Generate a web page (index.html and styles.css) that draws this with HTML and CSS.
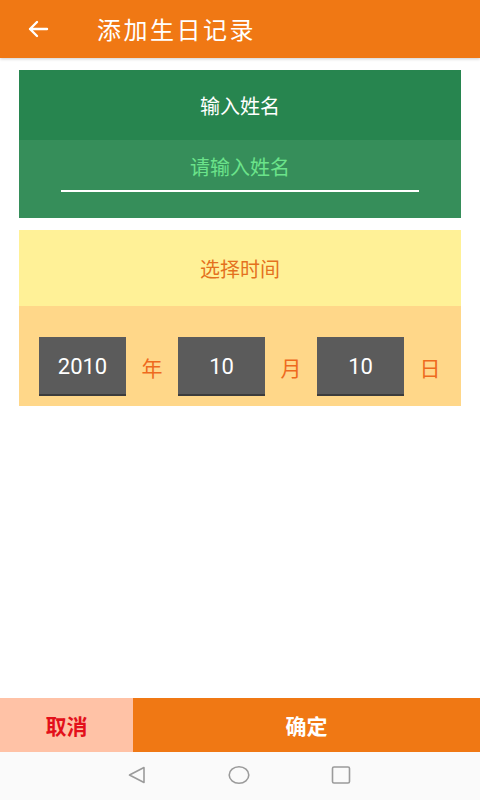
FILE: index.html
```html
<!DOCTYPE html>
<html lang="zh">
<head>
<meta charset="utf-8">
<link rel="stylesheet" href="styles.css">
</head>
<body>
<div class="app">
  <header class="topbar">
    <svg class="back" width="22" height="18" viewBox="0 0 22 18"><path d="M20 9H3M10 2L3 9l7 7" fill="none" stroke="#fff" stroke-width="2.4" stroke-linecap="round" stroke-linejoin="round"/></svg>
    <h1 class="title">添加生日记录</h1>
  </header>
  <main class="content">
    <section class="card name-card">
      <div class="card-head">输入姓名</div>
      <div class="card-body">
        <div class="name-input">请输入姓名</div>
      </div>
    </section>
    <section class="card date-card">
      <div class="card-head">选择时间</div>
      <div class="date-row">
        <div class="num">2010</div><div class="unit">年</div>
        <div class="num">10</div><div class="unit">月</div>
        <div class="num">10</div><div class="unit">日</div>
      </div>
    </section>
  </main>
  <footer class="actions">
    <div class="btn cancel">取消</div>
    <div class="btn ok">确定</div>
  </footer>
  <nav class="navbar">
    <svg width="20" height="20" viewBox="0 0 20 20"><path d="M17 2.5v15L2.5 10z" fill="none" stroke="#9b9b9b" stroke-width="1.6" stroke-linejoin="round"/></svg>
    <svg width="22" height="20" viewBox="0 0 22 20"><ellipse cx="11" cy="10" rx="9.8" ry="8.2" fill="none" stroke="#9b9b9b" stroke-width="1.6"/></svg>
    <svg width="20" height="20" viewBox="0 0 20 20"><rect x="1.5" y="2" width="17" height="16" rx="1.5" fill="none" stroke="#9b9b9b" stroke-width="1.6"/></svg>
  </nav>
</div>
</body>
</html>
```
FILE: styles.css
```css
* { box-sizing: border-box; margin: 0; padding: 0; }
html, body { width: 480px; height: 800px; background: #fff; }
body { font-family: "Noto Sans CJK SC", "Noto Sans", sans-serif; }
.app { display: flex; flex-direction: column; height: 800px; }
.topbar {
  height: 58px; background: #F07814; display: flex; align-items: center;
  box-shadow: 0 1px 3px rgba(0,0,0,0.2); position: relative; z-index: 1;
}
.back { margin-left: 27px; }
.title { margin-left: 48px; color: #fff; font-size: 24px; font-weight: 400; letter-spacing: 2.5px; line-height: 1; }
.content { flex: 1; padding: 12px 19px 0; display: flex; flex-direction: column; gap: 12px; }
.card { width: 442px; }
.card-head { display: flex; align-items: center; justify-content: center; font-size: 20px; }
.name-card .card-head { height: 70px; background: #27854F; color: #fff; }
.name-card .card-body { height: 78px; background: #368E5A; padding: 0 42px; }
.name-input {
  height: 52px; border-bottom: 2px solid #fff; color: #6BE38A; font-size: 20px;
  display: flex; align-items: center; justify-content: center; padding-top: 2px;
}
.date-card .card-head { height: 76px; background: #FFF197; color: #E4711E; }
.date-row { height: 100px; background: #FFD789; display: flex; align-items: center; padding: 31px 0 10px 20px; }
.num {
  width: 87px; height: 59px; background: #5B5B5B; border-bottom: 2px solid #3c3c3c;
  color: #fff; font-family: Roboto, "Noto Sans", sans-serif; font-size: 22px;
  display: flex; align-items: center; justify-content: center; padding-top: 2px;
}
.unit { width: 52px; text-align: center; color: #EE6A1E; font-size: 21px; }
.actions { height: 54px; display: flex; }
.btn { display: flex; align-items: center; justify-content: center; font-size: 21px; }
.cancel { width: 133px; background: #FFC2A6; color: #E3101A; font-weight: 700; }
.ok { flex: 1; background: #F07814; color: #fff; font-weight: 700; }
.navbar { height: 48px; background: #FAFAFA; display: flex; align-items: center; justify-content: center; gap: 81px; padding-right: 2px; padding-bottom: 2px; }
```
